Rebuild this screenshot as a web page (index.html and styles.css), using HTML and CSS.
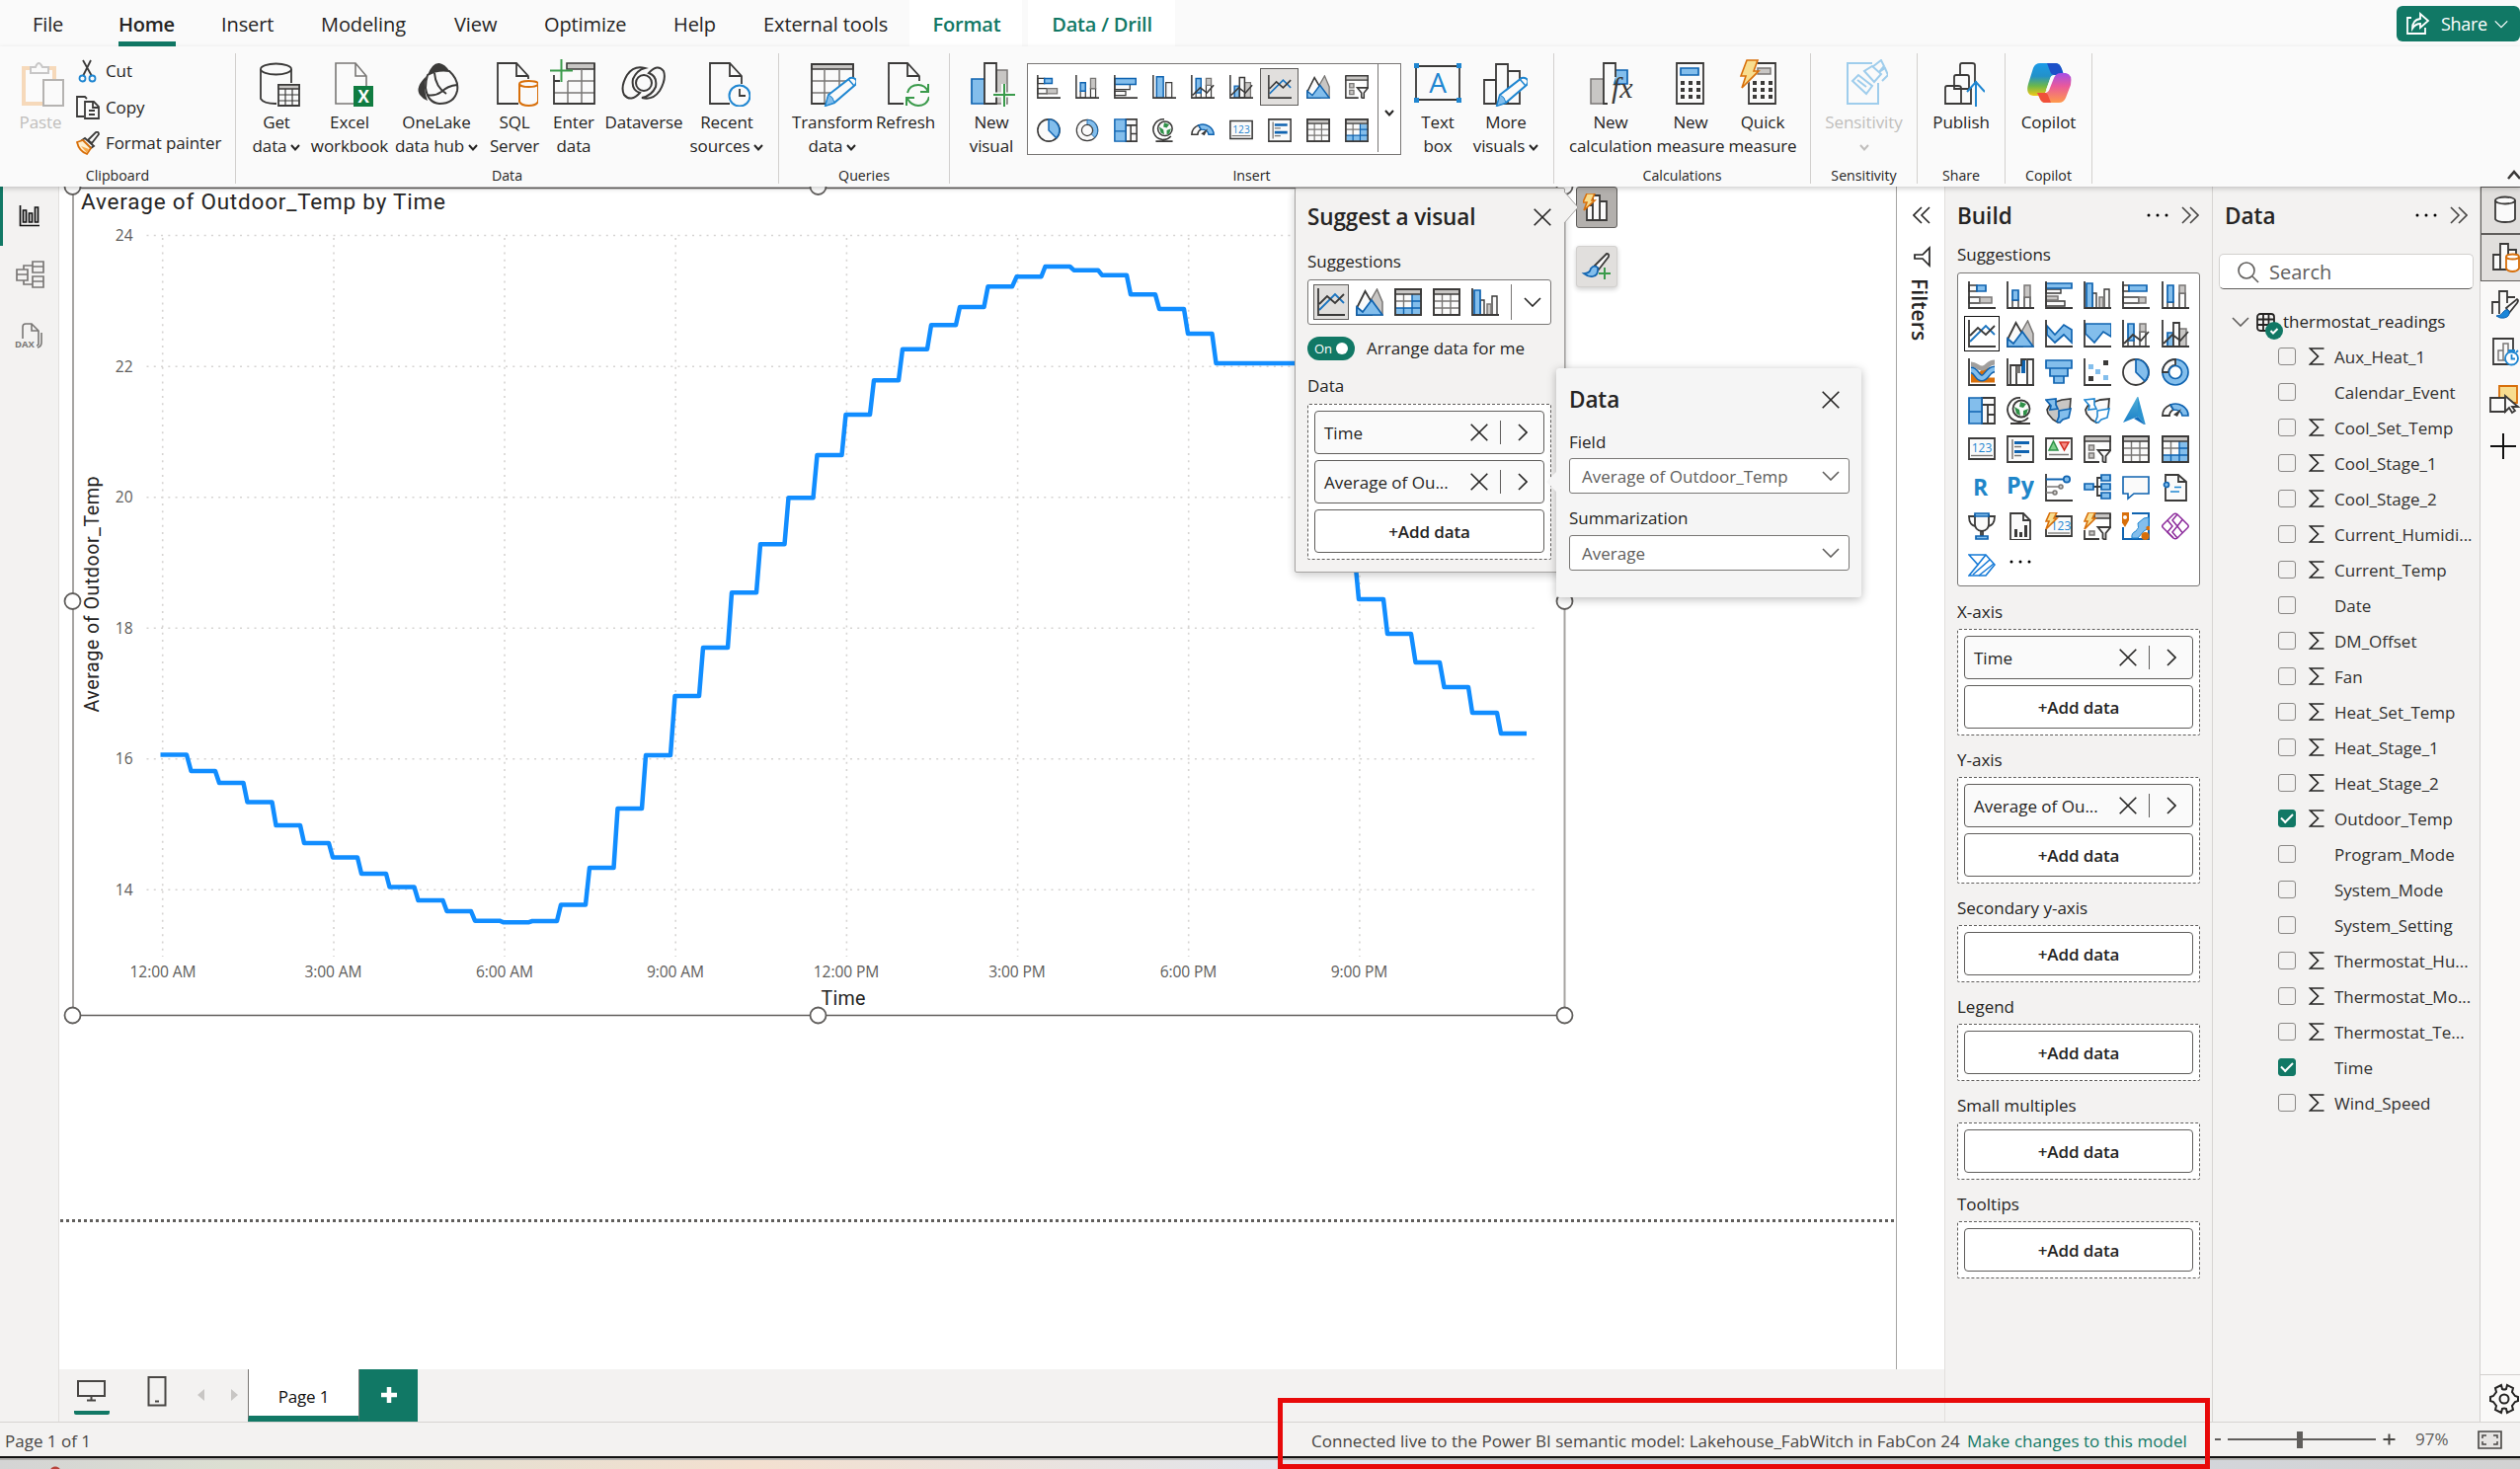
FILE: index.html
```html
<!DOCTYPE html>
<html lang="en">
<head>
<meta charset="utf-8">
<title>Report - Power BI Desktop</title>
<link rel="stylesheet" href="styles.css">
</head>
<body>
<svg class="defs" width="0" height="0">
<defs>
<linearGradient id="cpA" x1="0" y1="0" x2="0" y2="1"><stop offset="0" stop-color="#1b9be8"/><stop offset=".4" stop-color="#2391c9"/><stop offset=".7" stop-color="#6cb84a"/><stop offset="1" stop-color="#f3c716"/></linearGradient>
<linearGradient id="cpB" x1="0" y1="0" x2="0" y2="1"><stop offset="0" stop-color="#a44fe6"/><stop offset=".45" stop-color="#ea5a9a"/><stop offset="1" stop-color="#ff9a4a"/></linearGradient>
<linearGradient id="arw" x1="0" y1="0" x2="0" y2="1"><stop offset="0" stop-color="#52b0d8"/><stop offset="1" stop-color="#1a80c8"/></linearGradient>
</defs>
</svg>
<svg class="sprite">
<!-- visual type icons, 28px grid -->
<symbol id="sbar" viewBox="0 0 28 28"><path class="w" d="M1 4h8v6H1zM1 16h11v6H1z"/><path class="b" d="M9 4h9v6H9z"/><path class="g" d="M12 16h12v6H12z"/><path class="k" d="M1 0v27h27"/></symbol>
<symbol id="scol" viewBox="0 0 28 28"><path class="w" d="M6 19h6v8H6zM18 16h6v11h-6z"/><path class="b" d="M6 9h6v10H6z"/><path class="g" d="M18 4h6v12h-6z"/><path class="k" d="M1 0v27h27"/></symbol>
<symbol id="cbar" viewBox="0 0 28 28"><path class="w" d="M1 8h15v4H1zM1 20h19v5H1z"/><path class="g" d="M1 15h12v4H1z"/><path class="b" d="M1 2h26v5H1z"/><path class="k" d="M1 0v27h27"/></symbol>
<symbol id="ccol" viewBox="0 0 28 28"><path class="w" d="M9 12h4v15H9zM21 8h5v19h-5z"/><path class="g" d="M16 16h4v11h-4z"/><path class="b" d="M3 2h6v25H3z"/><path class="k" d="M1 0v27h27"/></symbol>
<symbol id="cbar2" viewBox="0 0 28 28"><path class="w" d="M1 11h18v6H1zM1 19h13v5H1z"/><path class="b" d="M1 4h25v7H1z"/><path class="k" d="M1 0v27h27"/></symbol>
<symbol id="ccol2" viewBox="0 0 28 28"><path class="w" d="M16 9h7v18h-7z"/><path class="b" d="M5 2h8v25H5z"/><path class="k" d="M1 0v27h27"/></symbol>
<symbol id="hbar" viewBox="0 0 28 28"><path class="w" d="M1 4h6v6H1zM1 16h16v6H1z"/><path class="b" d="M7 4h18v6H7z"/><path class="g" d="M17 16h7v6h-7z"/><path class="k" d="M1 0v27h27"/></symbol>
<symbol id="hcol" viewBox="0 0 28 28"><path class="w" d="M6 21h6v6H6zM18 12h6v15h-6z"/><path class="b" d="M6 4h6v17H6z"/><path class="g" d="M18 4h6v8h-6z"/><path class="k" d="M1 0v27h27"/></symbol>
<symbol id="line" viewBox="0 0 28 28"><path class="bl" d="M2 22 18 6l9 9"/><path class="k" d="M1 0v27h27M2 16l8-8 8 7 9-9"/></symbol>
<symbol id="area" viewBox="0 0 28 28"><path class="g" d="M14 14 21.500 1 27 14v13H14z"/><path class="w k2" d="M1 20 9.500 3 16 14v13H1z"/><path class="b" d="M1 19l6 5 9-12 11 15H1z"/></symbol>
<symbol id="sarea" viewBox="0 0 28 28"><path class="b" d="M2 6l8 9 9-10 8 5v13l-8-8-9 8-8-8z"/><path class="k" d="M1 0v27h27"/></symbol>
<symbol id="harea" viewBox="0 0 28 28"><path class="b" d="M2 4h26v13l-8-5-9 11-9-9z"/><path class="k" d="M1 0v27h27"/></symbol>
<symbol id="lscol" viewBox="0 0 28 28"><path class="w" d="M6 20h6v7H6zM18 12h6v15h-6z"/><path class="b" d="M6 4h6v17H6z"/><path class="g" d="M18 4h6v8h-6z"/><path class="k" d="M1 0v27h27M2 24l9-9 8 6 8-9"/></symbol>
<symbol id="lccol" viewBox="0 0 28 28"><path class="b" d="M6 13h6v14H6z"/><path class="g" d="M18 9h7v18h-7z"/><path class="w k2" d="M12 3h6v24h-6z"/><path class="k" d="M1 0v27h27M2 24l9-9 8 6 8-9"/></symbol>
<symbol id="ribbon" viewBox="0 0 28 28"><path d="M3 18h8l6-6h10M3 22h24" stroke="#d86f0a" stroke-width="5" fill="none"/><path d="M3 6c6 0 7 5 12 4 5-1 5-6 12-6" stroke="#a19f9d" stroke-width="5" fill="none"/><path d="M3 12c6 0 6 8 11 8s6-9 13-9" stroke="#0f63b0" stroke-width="7" fill="none"/><path d="M3 12c6 0 6 8 11 8s6-9 13-9" stroke="#83beec" stroke-width="4" fill="none"/><path class="k" d="M1 0v27h27"/></symbol>
<symbol id="wfall" viewBox="0 0 28 28"><path class="w k2" d="M4 7h6v20H4zM21 1h6v26h-6z"/><path d="M10 7h4v8h-4z" fill="#797775"/><path d="M15 1h4v14h-4z" fill="#0f63b0"/><path class="k" d="M1 0v27h27M10 7h5V1h5"/></symbol>
<symbol id="funnel" viewBox="0 0 28 28"><path class="b" d="M1 2h26v8H1zM5 10h18v8H5zM9 18h10v7H9z"/></symbol>
<symbol id="scat" viewBox="0 0 28 28"><path fill="#3b3a39" d="M20 2h5v5h-5zM5 18h5v5H5z"/><path fill="#83beec" d="M5 6h5v5H5zM12 11h5v5h-5zM20 17h5v5h-5z"/><path class="k" d="M1 0v27h27"/></symbol>
<symbol id="pie" viewBox="0 0 28 28"><circle class="w k2" cx="14" cy="14" r="13"/><path class="b" d="M14 1v13l9 9A13 13 0 0 0 14 1z"/></symbol>
<symbol id="donut" viewBox="0 0 28 28"><circle class="b" cx="14" cy="14" r="13"/><path class="w k2" d="M1 14A13 13 0 0 1 14 1v6a7 7 0 0 0-7 7z"/><circle class="bw" cx="14" cy="14" r="6.500"/></symbol>
<symbol id="donut2" viewBox="0 0 28 28"><circle class="w" cx="14" cy="14" r="12.500"/><path d="M14 1.500v6a6.500 6.500 0 0 1 5 11l4 4a12.500 12.500 0 0 0-9-21z" fill="#83beec" stroke="#0f63b0" stroke-width="1"/><circle class="w" cx="14" cy="14" r="6.500" fill="#fff"/></symbol>
<symbol id="tree" viewBox="0 0 28 28"><path class="w k2" d="M14 1h13v7H14zM14 8h6v19h-6zM20 8h7v10h-7zM20 18h7v9h-7z"/><path class="b" d="M1 1h13v14H1zM1 15h13v12H1z"/></symbol>
<symbol id="globe" viewBox="0 0 28 28"><path class="k" d="M14 1A12 12 0 1 0 22 21M14 24v3M4 27h20"/><circle class="w k2" cx="15" cy="12" r="8.500"/><path fill="#2f9148" d="M14 5l6 2-3 4-4-1zM8 10l5 3 1 6-4-2zM17 14l5-2-2 6-3 1z"/></symbol>
<symbol id="fmap" viewBox="0 0 28 28"><path d="M11 5l6-2 9-1-1 12-8 8-4 4-5-3-5-6-1-4 3-5z" fill="#c8c6c4" stroke="#3b3a39" stroke-width="1.600"/><path class="b" d="M1 3l10-1v6l2 4-8 1 1-4zM14 14l12-2-2 9-6 2-3 3-3-1 2-5z"/></symbol>
<symbol id="smap" viewBox="0 0 28 28"><path class="k w" d="M11 5l6-2 9-1-1 12-8 8-4 4-5-3-5-6-1-4 3-5z"/><path d="M1 3l10-1v6l2 4-8 1 1-4zM14 14l12-2-2 9-6 2-3 3-3-1 2-5z" fill="#fff" stroke="#1f86d1" stroke-width="1.600"/></symbol>
<symbol id="azmap" viewBox="0 0 28 28"><path d="M16-1v21L1 26z" fill="url(#arw)"/><path d="M16-1l8 30-8-9z" fill="#2b93cf"/><path d="M16 20l-4 2 12 7z" fill="#0f6cbd"/></symbol>
<symbol id="gauge" viewBox="0 0 28 28"><path class="w k2" d="M1 19A13 12 0 0 1 9 8l3 5q-4 2-4 6z"/><path class="b" d="M9 8a13 12 0 0 1 18 11h-6q-1-6-9-6z"/><path d="M12 18 20 12l-4 8z" fill="#3b3a39"/></symbol>
<symbol id="card" viewBox="0 0 28 28"><path class="k w" d="M1 3h26v21H1z"/><text x="14" y="17" font-size="12" text-anchor="middle" fill="#1f86d1">123</text><path d="M3 20.500h22" stroke="#797775" stroke-width="1.300"/></symbol>
<symbol id="mcard" viewBox="0 0 28 28"><path class="k w" d="M1 1h26v26H1z"/><path d="M6 4v20M8 11.500h7M8 20.500h7" stroke="#797775" stroke-width="1.500"/><path d="M8 7.500h15M8 16.500h15" stroke="#0f63b0" stroke-width="3"/></symbol>
<symbol id="kpi" viewBox="0 0 28 28"><path class="k w" d="M1 3h26v21H1z"/><path d="M4 15l4.500-9 4.500 9z" fill="#7ccf8a" stroke="#2f9148" stroke-width="1.500"/><path d="M15 7h9l-4.500 8z" fill="#f58b84" stroke="#d1281d" stroke-width="1.500"/><path d="M4 19.500h20" stroke="#797775" stroke-width="1.500"/></symbol>
<symbol id="slicer" viewBox="0 0 28 28"><path class="w k2" d="M1 1h26v13M1 1v26h15"/><path class="gd" d="M1 1h26v5H1z"/><path d="M5.500 10h5v5h-5zM5.500 18h5v5h-5z" fill="#c8c6c4" stroke="#797775" stroke-width="1.500"/><path class="k w" d="M14.500 15h13l-5 6v7l-3-1.500V21z"/></symbol>
<symbol id="table" viewBox="0 0 28 28"><path class="w" d="M1 1h26v26H1z"/><path d="M9.500 6v21M18 6v21M1 13h26M1 20h26" stroke="#797775" stroke-width="1.400"/><path class="gd" d="M1 1h26v5H1z"/><path class="k" d="M1 1h26v26H1z"/></symbol>
<symbol id="matrix" viewBox="0 0 28 28"><path class="w" d="M1 1h26v26H1z"/><path d="M18 6h9v21H1v-7h17z" fill="#83beec"/><path d="M9.500 6v14M1 13h17" stroke="#797775" stroke-width="1.400"/><path d="M18 6v21M1 20h26M9.500 20v7M18 13h9" stroke="#0f63b0" stroke-width="1.400"/><path class="gd" d="M1 1h26v5H1z"/><path class="k" d="M1 1h26v26H1z"/></symbol>
<symbol id="rr" viewBox="0 0 28 28"><text x="12.500" y="22" font-size="23" font-weight="700" text-anchor="middle" fill="#1f86c9">R</text></symbol>
<symbol id="py" viewBox="0 0 28 28"><text x="14" y="20" font-size="23" font-weight="700" text-anchor="middle" fill="#1f86c9" textLength="28" lengthAdjust="spacingAndGlyphs">Py</text></symbol>
<symbol id="infl" viewBox="0 0 28 28"><path class="k" d="M1 0v27h27"/><path d="M1 13h13M1 19h7" stroke="#797775" stroke-width="1.500"/><path d="M1 5.500h18" stroke="#0f63b0" stroke-width="2"/><circle class="b" cx="22" cy="5.500" r="3.200"/><circle class="g" cx="16" cy="13" r="2"/><circle class="g" cx="10" cy="19" r="2"/></symbol>
<symbol id="decomp" viewBox="0 0 28 28"><path class="k" d="M10 13h8M18 4h-4v18h4"/><path class="b" d="M1 10h9v6H1zM18 1h9v6h-9zM18 10h9v6h-9zM18 19h9v6h-9z"/></symbol>
<symbol id="qa" viewBox="0 0 28 28"><path d="M1 3h26v17H12l-6 5v-5H1z" fill="#fafafa" stroke="#0f63b0" stroke-width="1.600"/></symbol>
<symbol id="narr" viewBox="0 0 28 28"><path class="w k2" d="M4 9V1h13l8 7v19H4V14"/><path class="k" d="M17 1v7h8"/><circle class="b" cx="5" cy="11" r="2.500"/><path d="M13 13.500h7M9 18h9" stroke="#1f86d1" stroke-width="1.500"/></symbol>
<symbol id="trophy" viewBox="0 0 28 28"><path class="k" d="M8 4H1q0 10 8 10M20 4h7q0 10-8 10"/><path class="k w" d="M7 3h14v9q0 6-7 7-7-1-7-7zM13 19h2v5h-2z"/><path class="b" d="M7 1h14v3H7zM8 24h12v3H8z"/></symbol>
<symbol id="pagin" viewBox="0 0 28 28"><path class="k w" d="M4 1h13l7 7v20H4z"/><path class="k" d="M17 1v7h7"/><path d="M8 17h3v8H8zM13 20h3v5h-3zM18 13h3v12h-3z" fill="#3b3a39"/></symbol>
<symbol id="ncard" viewBox="0 0 28 28"><path class="w k2" d="M10 4h17v20H1v-7"/><text x="16" y="18" font-size="12" text-anchor="middle" fill="#1f86d1">123</text><path d="M3 21h22" stroke="#797775" stroke-width="1.300"/><path class="o" d="M5 0h7l-3 6h3L1 17l3-8H1z"/></symbol>
<symbol id="nslicer" viewBox="0 0 28 28"><path class="gd" d="M11 1h16v5H11z"/><path class="k" d="M27 1v13M1 18v9h15"/><path d="M6 19h5v4H6z" class="g"/><path class="k w" d="M14.500 15h13l-5 6v7l-3-1.500V21z"/><path class="o" d="M5 0h7l-3 6h3L1 17l3-8H1z"/></symbol>
<symbol id="arc" viewBox="0 0 28 28"><path d="M10 1h17v26H1V15" fill="none" stroke="#0f63b0" stroke-width="2"/><path d="M10 26q-1-5 4-7 4-3 2-8l6-5 5-1v11l-5 3-6 7z" fill="#83beec" stroke="#1f86d1"/><path d="M-1 0h8v8l-4 7-4-6z" fill="#d86f0a"/><circle cx="3" cy="5" r="2" fill="#fff"/><circle cx="23.500" cy="24" r="4" fill="#d86f0a"/><circle cx="26.500" cy="16" r="2.200" fill="#d86f0a"/></symbol>
<symbol id="papps" viewBox="0 0 28 28"><g fill="none" stroke="#8d2c9c" stroke-width="1.500"><path d="M12 2 1.500 12.500q-1.500 1.500 0 3L12 26q2 1.500 4 0l10.500-10.500q1.500-1.500 0-3L16 2q-2-1.500-4 0z"/><path d="M16 2l-5 6 5 6 5-6.500M16 14l-5 6 5 6M16 14l5-6.500M16 14l5 6.500M12 26 6 20 11 14 6 8"/></g></symbol>
<symbol id="pauto" viewBox="0 0 28 28"><g fill="#fff" stroke="#1479d6" stroke-width="1.600"><path d="M1 4h17l9 10-9 11H1l9-11z"/><path d="M10 14l8-10M5 24 22 9M11 25 26 13" fill="none"/></g></symbol>

<!-- ribbon icons, 48px grid -->
<symbol id="paste" viewBox="0 0 48 48"><g opacity=".38"><path d="M7 9h31v36H7z" fill="#fff" stroke="#f0a653" stroke-width="4"/><path d="M14 14V8h5q3-8 7 0h6v6z" fill="#fafafa" stroke="#797775" stroke-width="2"/></g><path d="M27 21h20v26H27z" fill="#fafafa" stroke="#b5b3b1" stroke-width="2"/></symbol>
<symbol id="getd" viewBox="0 0 48 48"><path class="w k2" d="M8 10v30q3 5 15 5l16-2V10"/><ellipse class="w k2" cx="23.500" cy="10" rx="15.500" ry="5.500"/><path d="M24 24h24v24H24z" fill="#fafafa"/><path class="w k2" d="M26 26h21v21H26z"/><path class="gd" d="M26 26h21v4H26z"/><path d="M33 30v17M40 30v17M26 36h21M26 42h21" stroke="#3b3a39" stroke-width="1.200"/></symbol>
<symbol id="excel" viewBox="0 0 48 48"><path d="M28 45H10V4h20l11 13v10M30 4v13h11" fill="none" stroke="#797775" stroke-width="1.600"/><path d="M28 27h20v21H28z" fill="#107c41"/><text x="38" y="44" font-size="17" font-weight="700" text-anchor="middle" fill="#fff">X</text></symbol>
<symbol id="onelake" viewBox="0 0 48 48"><path d="M15 16Q20 3 27 4q6 1 10 8-10-3-22 4zM14 17Q2 28 7 36q3 4 8 6-5-12-1-25z" fill="#3b3a39"/><g fill="none" stroke="#3b3a39" stroke-width="2"><path d="M15 16q10-6 22-4 10 9 8 20-3 13-18 13-12-1-14-16 0-7 2-13z"/><path d="M22 14q1 14 12 21M14 36q8 2 15-3 6-6 16-7"/></g></symbol>
<symbol id="sql" viewBox="0 0 48 48"><path class="k" d="M28 45H7V4h19l12 13v3M26 4v13h12"/><path d="M29 25v18q2 4 9.500 4t9.500-4V25" fill="#fafafa" stroke="#d86f0a" stroke-width="2"/><ellipse cx="38.500" cy="25" rx="9.500" ry="3" fill="#fafafa" stroke="#d86f0a" stroke-width="2"/></symbol>
<symbol id="enter" viewBox="0 0 48 48"><path class="gd" d="M17 4h28v6H17z"/><path d="M18 22v23M32 10v35M4 34h41M18 22h27" stroke="#797775" stroke-width="1.500"/><path class="k" d="M45 4v41H4V16M4 22h6"/><path d="M11.500 0v23M0 11.500h23" stroke="#3a9a4b" stroke-width="2"/></symbol>
<symbol id="dataverse" viewBox="0 0 48 48"><g fill="none" stroke="#3b3a39" stroke-width="2"><path d="M25 9Q14 6 7 16q-7 12-3 20 7 8 16-2-9-3-7-14 4-9 12-11z"/><path d="M22 39q11 3 18-7 7-12 4-20-6-8-15 2 9 3 7 14-4 9-14 11z"/><circle cx="24" cy="24" r="8"/></g></symbol>
<symbol id="recent" viewBox="0 0 48 48"><path class="k" d="M27 45H7V4h20l12 13v8M27 4v13h12"/><circle cx="37" cy="37" r="10.500" fill="#fafafa" stroke="#1f86d1" stroke-width="2"/><path class="k" d="M37 30v7h6"/></symbol>
<symbol id="transf" viewBox="0 0 48 48"><path class="gd" d="M3 5h42v5H3z"/><path d="M16 10v35M31 10v20M3 22h38M3 34h24" stroke="#797775" stroke-width="1.500"/><path class="k" d="M24 45H3V5h42v16"/><use href="#pencil"/></symbol>
<symbol id="pencil" viewBox="0 0 48 48"><path d="M17 47l3-11 22-17q4-1 6 2 1 3-1 5L26 44z" fill="#fafafa" stroke="#1f86d1" stroke-width="2"/><path d="M17 47l3-11q5 2 6 8z" fill="#83beec" stroke="#1f86d1"/><path d="M40 20l6 7" stroke="#1f86d1" stroke-width="1.500"/></symbol>
<symbol id="refresh" viewBox="0 0 48 48"><path class="k" d="M22 45H7V4h19l12 13v5M26 4v13h12"/><g fill="none" stroke="#3a9a4b" stroke-width="2"><path d="M26 34q2-8 11-8 7 0 10 7M47 25v8h-8M48 38q-2 9-11 9-7 0-11-7M25 47v-8h8"/></g></symbol>
<symbol id="newvis" viewBox="0 0 48 48"><path class="b" d="M4 20h13v25H4z"/><path class="g" d="M29 11h11v34H29z"/><path class="w k2" d="M17 4h12v41H17z"/><path d="M24 36h24M36.500 25v23" stroke="#fafafa" stroke-width="5"/><path d="M26 36h22M37 25v23" stroke="#3a9a4b" stroke-width="2"/></symbol>
<symbol id="textbox" viewBox="0 0 48 48"><path class="w k2" d="M2 7h44v34H2z"/><text x="24" y="34" font-size="28" text-anchor="middle" fill="#1f86d1">A</text><path d="M0 4h5v5H0zM43 4h5v5h-5zM0 39h5v5H0zM43 39h5v5h-5z" fill="#1f86d1"/></symbol>
<symbol id="morevis" viewBox="0 0 48 48"><path class="w k2" d="M2 21h12v24H2zM26 12h12v33H26z"/><path class="w k2" d="M14 5h12v40H14z"/><use href="#pencil" x="-2"/></symbol>
<symbol id="newcalc" viewBox="0 0 48 48"><path class="g" d="M4 20h13v25H4z"/><path class="b" d="M28 11h13v14H28z"/><path class="w k2" d="M29 18V4H17v41h4"/><text x="25" y="39" font-family="Liberation Serif,serif" font-size="30" font-style="italic" fill="#3b3a39">fx</text></symbol>
<symbol id="calc" viewBox="0 0 48 48"><path class="w k2" d="M10 4h27v41H10z"/><path d="M14 22h4v4h-4zM22 22h4v4h-4zM30 22h4v4h-4zM14 29h4v4h-4zM22 29h4v4h-4zM30 29h4v4h-4zM14 36h4v4h-4zM22 36h4v4h-4zM30 36h4v4h-4z" fill="#3b3a39"/></symbol>
<symbol id="newmeas" viewBox="0 0 48 48"><use href="#calc"/><path class="b" d="M14 9h18v7H14z"/></symbol>
<symbol id="quick" viewBox="0 0 48 48"><use href="#calc"/><path class="g" d="M19 9h13v6H19z"/><path d="M0 0h20l-4 12h5L1 33z" fill="#fafafa"/><path class="o" d="M8 1h11l-4 11h5L3 29l4-12H2z"/></symbol>
<symbol id="sens" viewBox="0 0 48 48"><g fill="none" stroke="#9fcdec" stroke-width="2"><path d="M32 4H7v41h31V24"/><path d="M12 22l6-6 14 11-6 8zM17 21l9 7M24 12l10 11 7-8-9-8zM32 8l9-7 3 6-5 6 6-4 3 7-6 6"/></g></symbol>
<symbol id="publish" viewBox="0 0 48 48"><path class="k" d="M35 30H17V18q0-2 2-2h11q2 0 2 2v11M23 16V6q0-2 2-2h10q3 0 3 2v20M8 45V29q0-2 2-2h11q3 0 3 2v16zM24 45h10V30"/><path d="M39 22v26M30 33l9-10 9 10" fill="none" stroke="#1f86d1" stroke-width="2"/></symbol>
<symbol id="copilot" viewBox="0 0 48 48"><path d="M15 4h16q4 0 6 6l2 6H29q-3 0-4 4l-4 12q-2 5-7 5H8q-8-1-5-12L8 9q2-5 7-5z" fill="url(#cpA)"/><path d="M22 4h9q4 0 6 6l2 6h-9q-4 0-5-4z" fill="#1c50c8"/><path d="M34 44H20q-4 0-6-6l-2-4h9q3-1 4-5l4-10q2-5 7-5h5q7 1 5 12l-5 13q-2 5-7 5z" fill="url(#cpB)"/><path d="M12 34h9q2 1 3 5l2 5h-6q-4 0-6-6z" fill="#f0503a"/><path d="M29 17h-2q-1 0-2 3l-4 11h1q2-1 3-4z" fill="#fafafa"/></symbol>
<symbol id="cut" viewBox="0 0 24 24"><path d="M7 1l9 16M15 1 7 17" stroke="#3b3a39" stroke-width="1.800"/><circle cx="6.500" cy="19.500" r="3" fill="none" stroke="#1f86d1" stroke-width="1.800"/><circle cx="16.500" cy="19.500" r="3" fill="none" stroke="#1f86d1" stroke-width="1.800"/></symbol>
<symbol id="copy" viewBox="0 0 24 24"><path class="k" d="M8 21H1V1h8l2 2"/><path class="k w" d="M9 6h9l5 5v12H9z"/><path class="k" d="M17 6v6h6M13 15h6M13 19h6" stroke-width="1.300"/></symbol>
<symbol id="brush" viewBox="0 0 24 24"><path class="k w" d="M12 9l8-8q3-1 3 2l-7 9z"/><path class="k w" d="M9 7l9 8-3 2-9-8z"/><path d="M7 9l8 8-4 6Q3 20 1 11z" fill="#fff0d0" stroke="#d86f0a" stroke-width="1.800"/><path d="M5 15l6 7 2-4z" fill="#f8a94a"/></symbol>
<!-- interface glyphs -->
<symbol id="x" viewBox="0 0 18 18"><path class="t" d="M.7.7l16.600 16.600M17.300.7.7 17.300"/></symbol>
<symbol id="right" viewBox="0 0 10 18"><path class="t" d="M1 1l8 8-8 8"/></symbol>
<symbol id="down" viewBox="0 0 18 10"><path class="t" d="M1 1l8 8 8-8"/></symbol>
<symbol id="dd" viewBox="0 0 10 7"><path d="M1 1l4 4.500L9 1" fill="none" stroke="currentColor" stroke-width="2"/></symbol>
<symbol id="dbl" viewBox="0 0 18 18"><path class="t" d="M1 1l8 8-8 8M9 1l8 8-8 8"/></symbol>
<symbol id="dots" viewBox="0 0 22 4"><circle cx="2" cy="2" r="1.500"/><circle cx="11" cy="2" r="1.500"/><circle cx="20" cy="2" r="1.500"/></symbol>
<symbol id="sigma" viewBox="0 0 16 18"><path d="M15.500 1H1.500l8 8-8 8h14" fill="none" stroke="#252423" stroke-width="1.700"/></symbol>
<symbol id="bolt" viewBox="0 0 28 28"><path class="w k2" d="M4 12h6v15H4zM17 8h7v19h-7z"/><path class="w k2" d="M10 2h7v25h-7z"/><path class="o" d="M4 0h8l-3 7h3L1 17l3-8H0z"/></symbol>
</svg>

<div class="app">
<header class="tabs">
  <div class="tab t-file">File</div><div class="tab t-home">Home</div><div class="tab t-insert">Insert</div><div class="tab t-model">Modeling</div><div class="tab t-view">View</div><div class="tab t-opt">Optimize</div><div class="tab t-help">Help</div><div class="tab t-ext">External tools</div><div class="tab ctx t-format">Format</div><div class="tab ctx t-drill">Data / Drill</div>
  <div class="share"><svg width="24" height="24" viewBox="0 0 24 24" fill="none" stroke="#fff" stroke-width="1.800"><path d="M6 6H2v16h18v-6"/><path d="M7 17q0-9 8-10V2l8 7-8 7v-4q-5 0-8 5z"/></svg><span>Share</span><svg width="14" height="9"><use href="#down"/></svg></div>
</header>
<section class="ribbon">
  <div class="group" style="width:239px"><div class="tools clip">
    <div class="btn off" style="width:74px"><svg class="big"><use href="#paste"/></svg><span>Paste</span></div>
    <div class="small"><div><svg><use href="#cut"/></svg>Cut</div><div><svg><use href="#copy"/></svg>Copy</div><div><svg><use href="#brush"/></svg>Format painter</div></div>
  </div><div class="gname">Clipboard</div></div>
  <div class="group" style="width:550px"><div class="tools pad8">
    <div class="btn" style="width:64px"><svg class="big"><use href="#getd"/></svg><span>Get</span><span>data<svg class="dd"><use href="#dd"/></svg></span></div>
    <div class="btn" style="width:84px"><svg class="big"><use href="#excel"/></svg><span>Excel</span><span>workbook</span></div>
    <div class="btn" style="width:92px"><svg class="big"><use href="#onelake"/></svg><span>OneLake</span><span>data hub<svg class="dd"><use href="#dd"/></svg></span></div>
    <div class="btn" style="width:66px"><svg class="big"><use href="#sql"/></svg><span>SQL</span><span>Server</span></div>
    <div class="btn" style="width:54px"><svg class="big"><use href="#enter"/></svg><span>Enter</span><span>data</span></div>
    <div class="btn" style="width:88px"><svg class="big"><use href="#dataverse"/></svg><span>Dataverse</span></div>
    <div class="btn" style="width:80px"><svg class="big"><use href="#recent"/></svg><span>Recent</span><span>sources<svg class="dd"><use href="#dd"/></svg></span></div>
  </div><div class="gname">Data</div></div>
  <div class="group" style="width:173px"><div class="tools pad12">
    <div class="btn" style="width:84px"><svg class="big"><use href="#transf"/></svg><span>Transform</span><span>data<svg class="dd"><use href="#dd"/></svg></span></div>
    <div class="btn" style="width:64px"><svg class="big"><use href="#refresh"/></svg><span>Refresh</span></div>
  </div><div class="gname">Queries</div></div>
  <div class="group" style="width:612px"><div class="tools pad12">
    <div class="btn" style="width:60px"><svg class="big"><use href="#newvis"/></svg><span>New</span><span>visual</span></div>
    <div class="gallery"><div class="cells">
      <i><svg><use href="#sbar"/></svg></i><i><svg><use href="#scol"/></svg></i><i><svg><use href="#cbar2"/></svg></i><i><svg><use href="#ccol2"/></svg></i><i><svg><use href="#lscol"/></svg></i><i><svg><use href="#lccol"/></svg></i><i class="sel"><svg><use href="#line"/></svg></i><i><svg><use href="#area"/></svg></i><i><svg><use href="#slicer"/></svg></i>
      <i><svg><use href="#pie"/></svg></i><i><svg><use href="#donut2"/></svg></i><i><svg><use href="#tree"/></svg></i><i><svg><use href="#globe"/></svg></i><i><svg><use href="#gauge"/></svg></i><i><svg><use href="#card"/></svg></i><i><svg><use href="#mcard"/></svg></i><i><svg><use href="#table"/></svg></i><i><svg><use href="#matrix"/></svg></i>
    </div><div class="more"><svg class="dd"><use href="#dd"/></svg></div></div>
    <div class="btn" style="width:74px"><svg class="big"><use href="#textbox"/></svg><span>Text</span><span>box</span></div>
    <div class="btn" style="width:64px"><svg class="big"><use href="#morevis"/></svg><span>More</span><span>visuals<svg class="dd"><use href="#dd"/></svg></span></div>
  </div><div class="gname">Insert</div></div>
  <div class="group" style="width:260px"><div class="tools pad12">
    <div class="btn" style="width:90px"><svg class="big"><use href="#newcalc"/></svg><span>New</span><span>calculation</span></div>
    <div class="btn" style="width:72px"><svg class="big"><use href="#newmeas"/></svg><span>New</span><span>measure</span></div>
    <div class="btn" style="width:74px"><svg class="big"><use href="#quick"/></svg><span>Quick</span><span>measure</span></div>
  </div><div class="gname">Calculations</div></div>
  <div class="group" style="width:108px"><div class="tools"><div class="btn off" style="width:108px"><svg class="big"><use href="#sens"/></svg><span>Sensitivity</span><span><svg class="dd"><use href="#dd"/></svg></span></div></div><div class="gname">Sensitivity</div></div>
  <div class="group" style="width:89px"><div class="tools"><div class="btn" style="width:89px"><svg class="big"><use href="#publish"/></svg><span>Publish</span></div></div><div class="gname">Share</div></div>
  <div class="group" style="width:88px"><div class="tools"><div class="btn" style="width:88px"><svg class="big"><use href="#copilot"/></svg><span>Copilot</span></div></div><div class="gname">Copilot</div></div>
  <svg class="collapse" width="14" height="10" viewBox="0 0 14 10"><path d="M1 9l6-7 6 7" fill="none" stroke="#3b3a39" stroke-width="2.500"/></svg>
</section>

<main class="body">
<nav class="views">
  <div class="cur"><svg width="22" height="22" viewBox="0 0 22 22" fill="none" stroke="#111" stroke-width="1.700"><path d="M1.500 0v20.500H21M4.500 5h3v12h-3zM10.500 8h3v9h-3zM16.500 2h3v15h-3z"/></svg></div>
  <div><svg width="29" height="29" viewBox="0 0 29 29" fill="none" stroke="#797775" stroke-width="1.700"><path d="M1 9h11v11H1zM1 14h11M17 1h11v11H17zM17 6h11M17 16h11v11H17zM17 21h11M8 9V5h9M8 20v4h9"/></svg></div>
  <div><svg width="30" height="28" viewBox="0 0 30 28" fill="none" stroke="#797775" stroke-width="1.600"><path d="M8 17V5q0-3 3-3h6l7 7v13q0 2-2 2M17 2v7h7M27 11v10q0 4-4 5"/><text x="0" y="26" font-size="9.500" font-weight="700" fill="#797775" stroke="none">DAX</text></svg></div>
</nav>
<div class="center">
  <div class="canvas">
    <svg class="chart" width="1860" height="1198" viewBox="60 189 1860 1198">
      <g class="grid"><path d="M148.500 238.500H1556M148.500 371.200H1556M148.500 503.700H1556M148.500 636.200H1556M148.500 768.700H1556M148.500 901.200H1556M164.700 241V969M338 241V969M511 241V969M684.200 241V969M857.400 241V969M1030.600 241V969M1203.700 241V969M1376.900 241V969"/></g>
      <path class="series" d="M162.500 764.500H189L193.500 781H218L222 793H246.500L250.500 812.500H275.500L279.500 836H304L308 854H333L337 868.500H362L366 885H391L394.500 898.500H419.500L423.500 912H448.500L452.500 923H477L481 932.700H506L510 934.300H535L539 933H564L568 916.500H593L597 879H621.500L625.500 819H650L654 765H679L683.500 705H708L712 656H737L741 600.300H766L770 551.300H794.500L798.500 504.300H823.500L827.500 461H852.500L856.500 420H881L885 385.300H910L914 353.700H939L943 329.300H968L972 311H996.500L1000.500 290.300H1025L1029.500 280.300H1054.500L1058.500 270H1083.500L1087.500 273.700H1112L1116 278.700H1141L1145 298.300H1170L1174 313H1199L1203 338H1227.500L1231.500 368H1314L1318 420H1343L1347 500H1366L1376 607H1401L1405 642H1429L1433.500 671H1458L1462.500 696H1487L1491 722H1516L1520 743H1546"/>
      <g class="ticks" text-anchor="end"><text x="134.500" y="244">24</text><text x="134.500" y="377">22</text><text x="134.500" y="509">20</text><text x="134.500" y="642">18</text><text x="134.500" y="774">16</text><text x="134.500" y="907">14</text></g>
      <g class="ticks" text-anchor="middle"><text x="165" y="990">12:00 AM</text><text x="337.500" y="990">3:00 AM</text><text x="511" y="990">6:00 AM</text><text x="684" y="990">9:00 AM</text><text x="857" y="990">12:00 PM</text><text x="1030" y="990">3:00 PM</text><text x="1203.500" y="990">6:00 PM</text><text x="1376.500" y="990">9:00 PM</text></g>
      <path d="M74 189v839M1584.500 189v839" stroke="#a6a4a2" stroke-width="2"/><path d="M73 190.500h1512M73 1028.500h1512" stroke="#605e5c" stroke-width="1.500"/>
      <g fill="#fff" stroke="#605e5c" stroke-width="1.800"><circle cx="73.500" cy="189" r="8"/><circle cx="828.500" cy="189" r="8"/><circle cx="1584.500" cy="189" r="8"/><circle cx="73.500" cy="609" r="8"/><circle cx="1584.500" cy="609" r="8"/><circle cx="73.500" cy="1028.500" r="8"/><circle cx="828.500" cy="1028.500" r="8"/><circle cx="1584.500" cy="1028.500" r="8"/></g>
      <text class="din" x="82" y="212" font-size="22.500" textLength="369">Average of Outdoor_Temp by Time</text>
      <text class="din" x="854" y="1018" font-size="19.700" text-anchor="middle" textLength="45">Time</text>
      <text class="din" transform="translate(99.500 602) rotate(-90)" font-size="19.700" text-anchor="middle" textLength="239">Average of Outdoor_Temp</text>
      <path d="M61 1236.500h1860" stroke="#605e5c" stroke-width="3" stroke-dasharray="3 3"/>
    </svg>
    <div class="viz-btn one"><svg width="28" height="28"><use href="#bolt"/></svg></div>
    <div class="viz-btn two"><svg width="28" height="28" viewBox="0 0 28 28"><path class="k w" d="M12 13 24 1q3 0 2 3L16 17z"/><path class="b" d="M1 21q6 0 7-5 3-4 7-1 1 8-5 9-4 1-9-3z"/><path d="M16 21h12M22 15v12" stroke="#3a9a4b" stroke-width="2"/></svg></div>
    <div class="suggest">
      <svg class="beak" width="16" height="34" viewBox="0 0 16 34"><path d="M0 1l14 16L0 33" fill="#f3f2f1" stroke="#a6a4a2"/></svg>
      <div class="head"><b>Suggest a visual</b><svg width="18" height="18"><use href="#x"/></svg></div>
      <div class="lbl l1">Suggestions</div>
      <div class="picks"><i class="sel"><svg><use href="#line"/></svg></i><i><svg><use href="#area"/></svg></i><i><svg><use href="#matrix"/></svg></i><i><svg><use href="#table"/></svg></i><i><svg><use href="#ccol"/></svg></i><span class="sep"></span><svg width="18" height="10"><use href="#down"/></svg></div>
      <div class="toggle"><span class="pill">On<em></em></span>Arrange data for me</div>
      <div class="lbl l2">Data</div>
      <div class="well"><div class="chip"><span>Time</span><svg width="18" height="18"><use href="#x"/></svg><u></u><svg width="10" height="18"><use href="#right"/></svg></div><div class="chip"><span>Average of Ou...</span><svg width="18" height="18"><use href="#x"/></svg><u></u><svg width="10" height="18"><use href="#right"/></svg></div><div class="add">+Add data</div></div>
    </div>
    <div class="datapop">
      <svg class="nib" width="12" height="22" viewBox="0 0 12 22"><path d="M12 0 1 11l11 11z" fill="#f5f5f5"/></svg>
      <div class="head"><b>Data</b><svg width="18" height="18"><use href="#x"/></svg></div>
      <div class="lbl">Field</div><div class="select"><span>Average of Outdoor_Temp</span><svg width="18" height="10"><use href="#down"/></svg></div>
      <div class="lbl lb2">Summarization</div><div class="select"><span>Average</span><svg width="18" height="10"><use href="#down"/></svg></div>
    </div>
  </div>
  <div class="filters"><svg width="18" height="18" class="flip"><use href="#dbl"/></svg><svg class="fun" width="18" height="20" viewBox="0 0 18 20"><path d="M16 1v18L9 12H1V8h8z" fill="none" stroke="#252423" stroke-width="1.700"/></svg><b>Filters</b></div>
  <div class="pages">
    <div class="mode on"><svg width="29" height="22" viewBox="0 0 29 22" fill="none" stroke="#484644" stroke-width="2"><path d="M1 1h27v15H1zM14.500 16v4M10 20.500h9"/></svg></div>
    <div class="mode ph"><svg width="20" height="31" viewBox="0 0 20 31" fill="none" stroke="#484644" stroke-width="2"><path d="M1.500 1h17v28.500h-17zM8 25.500h4"/></svg></div>
    <svg class="arr" width="7" height="12"><path d="M7 0v12L0 6z" fill="#c8c6c4"/></svg><svg class="arr r" width="7" height="12"><path d="M0 0v12l7-6z" fill="#c8c6c4"/></svg>
    <div class="page">Page 1</div><div class="plus"><svg width="18" height="18"><path d="M9 1v16M1 9h16" stroke="#fff" stroke-width="4.500"/></svg></div>
  </div>
</div>
<aside class="build">
  <div class="ptitle"><b>Build</b><svg width="22" height="4"><use href="#dots"/></svg><svg width="18" height="18"><use href="#dbl"/></svg></div>
  <div class="lbl sug">Suggestions</div>
  <div class="visgrid">
    <i><svg><use href="#sbar"/></svg></i><i><svg><use href="#scol"/></svg></i><i><svg><use href="#cbar"/></svg></i><i><svg><use href="#ccol"/></svg></i><i><svg><use href="#hbar"/></svg></i><i><svg><use href="#hcol"/></svg></i>
    <i class="sel"><svg><use href="#line"/></svg></i><i><svg><use href="#area"/></svg></i><i><svg><use href="#sarea"/></svg></i><i><svg><use href="#harea"/></svg></i><i><svg><use href="#lscol"/></svg></i><i><svg><use href="#lccol"/></svg></i>
    <i><svg><use href="#ribbon"/></svg></i><i><svg><use href="#wfall"/></svg></i><i><svg><use href="#funnel"/></svg></i><i><svg><use href="#scat"/></svg></i><i><svg><use href="#pie"/></svg></i><i><svg><use href="#donut"/></svg></i>
    <i><svg><use href="#tree"/></svg></i><i><svg><use href="#globe"/></svg></i><i><svg><use href="#fmap"/></svg></i><i><svg><use href="#smap"/></svg></i><i><svg><use href="#azmap"/></svg></i><i><svg><use href="#gauge"/></svg></i>
    <i><svg><use href="#card"/></svg></i><i><svg><use href="#mcard"/></svg></i><i><svg><use href="#kpi"/></svg></i><i><svg><use href="#slicer"/></svg></i><i><svg><use href="#table"/></svg></i><i><svg><use href="#matrix"/></svg></i>
    <i><svg><use href="#rr"/></svg></i><i><svg><use href="#py"/></svg></i><i><svg><use href="#infl"/></svg></i><i><svg><use href="#decomp"/></svg></i><i><svg><use href="#qa"/></svg></i><i><svg><use href="#narr"/></svg></i>
    <i><svg><use href="#trophy"/></svg></i><i><svg><use href="#pagin"/></svg></i><i><svg><use href="#ncard"/></svg></i><i><svg><use href="#nslicer"/></svg></i><i><svg><use href="#arc"/></svg></i><i><svg><use href="#papps"/></svg></i>
    <i><svg><use href="#pauto"/></svg></i><i class="dt"><svg><use href="#dots"/></svg></i>
  </div>
  <div class="lbl field first">X-axis</div><div class="well"><div class="chip"><span>Time</span><svg width="18" height="18"><use href="#x"/></svg><u></u><svg width="10" height="18"><use href="#right"/></svg></div><div class="add">+Add data</div></div>
  <div class="lbl field">Y-axis</div><div class="well"><div class="chip"><span>Average of Ou...</span><svg width="18" height="18"><use href="#x"/></svg><u></u><svg width="10" height="18"><use href="#right"/></svg></div><div class="add">+Add data</div></div>
  <div class="lbl field">Secondary y-axis</div><div class="well"><div class="add">+Add data</div></div>
  <div class="lbl field">Legend</div><div class="well"><div class="add">+Add data</div></div>
  <div class="lbl field">Small multiples</div><div class="well"><div class="add">+Add data</div></div>
  <div class="lbl field">Tooltips</div><div class="well"><div class="add">+Add data</div></div>
</aside>
<aside class="data">
  <div class="ptitle"><b>Data</b><svg width="22" height="4"><use href="#dots"/></svg><svg width="18" height="18"><use href="#dbl"/></svg></div>
  <div class="search"><svg width="22" height="22" viewBox="0 0 22 22" fill="none" stroke="#605e5c" stroke-width="1.600"><circle cx="9" cy="9" r="8"/><path d="M15 15l6 6"/></svg>Search</div>
  <div class="tbl"><svg width="18" height="10" class="gch"><use href="#down"/></svg><span class="ti"><svg width="19" height="19" viewBox="0 0 19 19" fill="none" stroke="#252423" stroke-width="1.800"><rect x="1" y="1" width="17" height="17" rx="3"/><path d="M7 1v17M12.500 1v17M1 6.500h17M1 12h17"/></svg><svg class="badge" width="18" height="18" viewBox="0 0 18 18"><circle cx="9" cy="9" r="9" fill="#117865"/><path d="M5.500 9l2.500 2.500 4.500-4.500" fill="none" stroke="#fff" stroke-width="2"/></svg></span><span>thermostat_readings</span></div>
  <div class="row"><s></s><svg><use href="#sigma"/></svg>Aux_Heat_1</div>
  <div class="row"><s></s><svg></svg>Calendar_Event</div>
  <div class="row"><s></s><svg><use href="#sigma"/></svg>Cool_Set_Temp</div>
  <div class="row"><s></s><svg><use href="#sigma"/></svg>Cool_Stage_1</div>
  <div class="row"><s></s><svg><use href="#sigma"/></svg>Cool_Stage_2</div>
  <div class="row"><s></s><svg><use href="#sigma"/></svg>Current_Humidi...</div>
  <div class="row"><s></s><svg><use href="#sigma"/></svg>Current_Temp</div>
  <div class="row"><s></s><svg></svg>Date</div>
  <div class="row"><s></s><svg><use href="#sigma"/></svg>DM_Offset</div>
  <div class="row"><s></s><svg><use href="#sigma"/></svg>Fan</div>
  <div class="row"><s></s><svg><use href="#sigma"/></svg>Heat_Set_Temp</div>
  <div class="row"><s></s><svg><use href="#sigma"/></svg>Heat_Stage_1</div>
  <div class="row"><s></s><svg><use href="#sigma"/></svg>Heat_Stage_2</div>
  <div class="row on"><s></s><svg><use href="#sigma"/></svg>Outdoor_Temp</div>
  <div class="row"><s></s><svg></svg>Program_Mode</div>
  <div class="row"><s></s><svg></svg>System_Mode</div>
  <div class="row"><s></s><svg></svg>System_Setting</div>
  <div class="row"><s></s><svg><use href="#sigma"/></svg>Thermostat_Hu...</div>
  <div class="row"><s></s><svg><use href="#sigma"/></svg>Thermostat_Mo...</div>
  <div class="row"><s></s><svg><use href="#sigma"/></svg>Thermostat_Te...</div>
  <div class="row on"><s></s><svg></svg>Time</div>
  <div class="row"><s></s><svg><use href="#sigma"/></svg>Wind_Speed</div>
</aside>
<nav class="rail">
  <div class="on"><svg viewBox="0 0 28 28"><path class="w k2" d="M4 5v19q2 3 10 3t10-3V5"/><ellipse class="w k2" cx="14" cy="5" rx="10" ry="3.500"/></svg></div>
  <div class="on"><svg viewBox="0 0 28 28"><path class="w k2" d="M2 12h7v15H2zM17 7h8v20h-8z"/><path class="w k2" d="M9 1h8v26H9z"/><path d="M15 14v12q2 3 6.500 3t6.500-3V14" fill="#fff" stroke="#d86f0a" stroke-width="1.800"/><ellipse cx="21.500" cy="14" rx="6.500" ry="2.500" fill="#fff" stroke="#d86f0a" stroke-width="1.800"/></svg></div>
  <div><svg viewBox="0 0 28 28"><path class="k" d="M2 24V12h7v12M9 22V1h8v12M17 7h8"/><path class="k w" d="M16 18l11-9q2 1 0 4l-8 10z"/><path d="M6 26q5 0 7-4 3-4 6-1 1 6-5 7-4 1-8-2z" fill="#1a86d9" stroke="#0f63b0"/></svg></div>
  <div><svg viewBox="0 0 28 28"><path class="k w" d="M3 1h20v26H3z"/><path d="M8 13h5v10H8zM13 6h5v17h-5z" fill="none" stroke="#797775" stroke-width="1.500"/><circle cx="21.500" cy="21" r="6.500" fill="#fff" stroke="#1f86d1" stroke-width="1.800"/><path d="M21.500 17v4.500H25M18 13h7M26 15l2-2" fill="none" stroke="#1f86d1" stroke-width="1.800"/></svg></div>
  <div><svg viewBox="0 0 28 28"><path d="M9 1h18v17H9z" fill="#f8dd8f" stroke="#d86f0a" stroke-width="1.800"/><path class="w k2" d="M0 13h15v14H0z"/><path class="w k2" d="M15 11v16l4-4 3 5 3-2-3-4h6z"/></svg></div>
  <div><svg viewBox="0 0 28 28"><path d="M13 1v26M0 14h26" stroke="#111" stroke-width="2"/></svg></div>
  <div class="gear"><svg viewBox="0 0 30 30"><path d="M12 1l1 4q2 1 4 0l1-4 6 3-1 4 3 4 3 1v4l-3 1-3 4 1 4-6 3-1-4q-2-1-4 0l-1 4-6-3 1-4-3-4-3-1v-4l3-1 3-4-1-4z" fill="none" stroke="#252423" stroke-width="2"/><circle cx="15" cy="15" r="4.500" fill="none" stroke="#252423" stroke-width="2"/></svg></div>
</nav>
</main>
<footer class="status">
  <span class="pg">Page 1 of 1</span>
  <span class="conn">Connected live to the Power BI semantic model: Lakehouse_FabWitch in FabCon 24</span><a>Make changes to this model</a>
  <svg class="zoomer" width="184" height="24" viewBox="0 0 184 24"><path d="M1 12h6M14 12h150" stroke="#605e5c" stroke-width="2"/><path d="M84 4h6v17h-6z" fill="#605e5c"/><path d="M171.500 12h12M177.500 6.500v11" stroke="#484644" stroke-width="2"/></svg><span class="pct">97%</span>
  <svg class="fit" width="25" height="19" viewBox="0 0 25 19"><path d="M1 1h23v17H1z" fill="#e6e4e2" stroke="#484644" stroke-width="1.600"/><path d="M5 8V5h4M16 5h4v3M5 11v3h4M16 14h4v-3" fill="none" stroke="#484644" stroke-width="1.500"/></svg>
</footer>
<div class="wall"></div>
<div class="mark"></div>
</div>
</body>
</html>
```
FILE: styles.css
```css
* { box-sizing: border-box; }
body { margin: 0; width: 2552px; height: 1488px; overflow: hidden; background: #fff; color: #252423; font: 17px/24px "Open Sans", "Noto Sans", sans-serif; }
svg { display: block; flex: none; overflow: visible; }
svg.defs { position: absolute; }
svg.sprite { display: none; }
b { font-weight: 600; }
i, em, u, s { font-style: normal; text-decoration: none; }
.app { position: relative; display: grid; grid-template-rows: 47px 142px 1252px 36px 11px; height: 1488px; }

/* icon paint */
.w { fill: #fafafa; stroke: #3b3a39; stroke-width: 1.4; }
.k { stroke: #3b3a39; stroke-width: 1.8; fill: none; }
.k.w { fill: #fafafa; }
.k2, .w.k2 { stroke: #3b3a39; stroke-width: 1.8; }
.b { fill: #83beec; stroke: #0f63b0; stroke-width: 1.7; }
.bw { fill: #fff; stroke: #0f63b0; stroke-width: 1.7; }
.bl { fill: none; stroke: #1a74c0; stroke-width: 1.8; }
.g { fill: #c8c6c4; stroke: #797775; stroke-width: 1.5; }
.gd { fill: #c8c6c4; stroke: #3b3a39; stroke-width: 1.6; }
.o { fill: #f8dd8f; stroke: #d86f0a; stroke-width: 1.6; }
.t { fill: none; stroke: currentColor; stroke-width: 1.6; }

/* menu tabs */
.tabs { display: flex; background: #fafafa; font-size: 20px; line-height: 50px; letter-spacing: -.1px; position: relative; z-index: 5; }
.tab { height: 47px; white-space: nowrap; }
.t-file { width: 87px; padding-left: 33px; }
.t-home { width: 58px; margin-left: 33px; font-weight: 600; border-bottom: 5px solid #117865; letter-spacing: -.3px; }
.t-insert { margin-left: 46px; width: 101px; }
.t-model { width: 135px; }
.t-view { width: 91px; }
.t-opt { width: 131px; }
.t-help { width: 91px; }
.t-ext { width: 148px; }
.ctx { background: #fff; color: #117865; font-weight: 600; text-align: center; letter-spacing: -.2px; }
.t-format { width: 114px; padding-left: 2px; }
.t-drill { width: 149px; margin-left: 6px; padding-left: 1px; }
.share { margin: 6px 1px 5px auto; width: 125px; display: flex; align-items: center; gap: 13px; padding-left: 9px; background: #117865; color: #fff; border-radius: 6px; font-size: 18px; letter-spacing: -.3px; line-height: 36px; }
.share span { margin-right: -6px; margin-left: -1px; }

/* ribbon */
.ribbon { display: flex; position: relative; z-index: 5; padding-top: 7px; background: #fafafa; box-shadow: 0 2px 5px rgba(0,0,0,.2); font-size: 17px; letter-spacing: -.1px; }
.group { height: 132px; border-right: 1.5px solid #d2d0ce; display: flex; flex-direction: column; white-space: nowrap; }
.tools { display: flex; height: 117px; padding-top: 6px; }
.pad8 { padding-left: 9px; } .pad12 { padding-left: 12px; }
.clip { padding-left: 4px; }
.btn { display: flex; flex-direction: column; align-items: center; }
.btn span { display: flex; justify-content: center; align-items: center; gap: 4px; height: 24px; }
.big { width: 48px; height: 48px; margin-bottom: 4px; }
.dd { width: 10px; height: 7px; margin-top: 3px; }
.off { color: #c0bebc; }
.small { display: flex; flex-direction: column; margin-top: -6px; }
.small div { display: flex; align-items: center; height: 36.500px; gap: 6px; margin-left: -1px; }
.small svg { width: 24px; height: 24px; }
.gname { text-align: center; font-size: 14.2px; line-height: 16px; letter-spacing: 0; }
.gallery { display: flex; width: 379px; height: 93px; margin: 4px 0 0 6px; border: 1.5px solid #797775; background: #fff; }
.cells { display: grid; grid-template-columns: repeat(9, 39px); grid-template-rows: 38px 38px; row-gap: 6px; padding: 4px 0 0 1px; width: 354px; }
.cells i { display: flex; align-items: center; justify-content: center; }
.cells i.sel { border: 1.5px solid #605e5c; background: #e1dfdd; }
.cells svg { width: 24px; height: 24px; }
.more { flex: 1; border-left: 1.5px solid #797775; display: flex; align-items: center; justify-content: center; padding-top: 6px; margin-bottom: 2px; }
.more .dd { margin-left: -1px; }
.collapse { margin: 118px 0 0 420px; }

/* workspace */
.body { display: grid; grid-template-columns: 60px 1909px 271px 271px 41px; border-bottom: 1px solid #d6d4d2; background: #f3f2f1; }
.views { border-right: 1px solid #e1dfdd; }
.views div { height: 59px; display: flex; align-items: center; justify-content: center; border-left: 3px solid transparent; padding-right: 2px; }
.views .cur { border-color: #117865; height: 60px; padding-bottom: 1px; }
.views div:nth-child(3) { height: 64px; }
.center { display: grid; grid-template-columns: 1860px 49px; grid-template-rows: 1198px 53px; }
.canvas { position: relative; background: #fff; overflow: hidden; }
.grid path { fill: none; stroke: #d6d4d2; stroke-width: 1.6; stroke-dasharray: 2 5.270; }
.series { fill: none; stroke: #118dff; stroke-width: 4.5; stroke-linejoin: round; }
.ticks { font-size: 15.6px; fill: #605e5c; letter-spacing: -.1px; }
.din { font-family: Roboto, "Open Sans", sans-serif; fill: #252423; }
.filters { border-left: 1.5px solid #a6a4a2; background: #fff; display: flex; flex-direction: column; align-items: center; padding-top: 20px; padding-right: 3px; }
.flip { transform: scaleX(-1); margin-right: -4px; }
.fun { margin: 23px 0 12px 6px; }
.filters b { writing-mode: vertical-rl; font-size: 21px; letter-spacing: .1px; }
.pages { grid-column: 1 / 3; display: flex; background: #f3f2f1; font-size: 17px; }
.mode { width: 36px; margin-left: 15px; padding: 11px 0 0 3px; }
.mode.on { border-bottom: 4px solid #117865; height: 46px; border-radius: 2px; }
.mode.ph { padding: 7px 0 0 0; margin-left: 38px; width: 20px; }
.arr { margin: 20px 0 0 31px; } .arr.r { margin-left: 27px; margin-right: 10px; }
.page { width: 113px; border-left: 1px solid #797775; border-right: 1px solid #797775; border-bottom: 6px solid #117865; background: #fff; color: #111; font-weight: 500; text-align: center; line-height: 56px; height: 53px; letter-spacing: -.2px; }
.plus { width: 59px; background: #117865; display: flex; align-items: center; justify-content: center; padding-bottom: 2px; }

/* floating panels */
.suggest, .datapop, .viz-btn { position: absolute; }
.suggest { left: 1251px; top: 1px; width: 274px; height: 390px; padding: 0 12px; background: #f3f2f1; border: 1px solid #a6a4a2; border-radius: 2px; box-shadow: 0 3px 8px rgba(0,0,0,.2); }
.beak { position: absolute; left: 272px; top: 2px; }
.head { display: flex; justify-content: space-between; align-items: center; }
.head b { font-size: 22.500px; letter-spacing: -.1px; }
.suggest .head { height: 58px; padding-right: 1px; }
.suggest .l1 { height: 34px; line-height: 31px; }
.picks { height: 46px; background: #fff; border: 1.5px solid #797775; border-radius: 3px; display: flex; align-items: center; padding-left: 5px; gap: 3px; width: 247px; }
.picks i { width: 36px; height: 36px; display: flex; align-items: center; justify-content: center; }
.picks i svg { width: 28px; height: 28px; }
.picks i.sel { background: #e1dfdd; border: 1.5px solid #605e5c; }
.picks .sep { width: 1px; height: 36px; background: #797775; margin: 0 9px 0 5px; }
.toggle { display: flex; align-items: center; gap: 12px; margin-top: 12px; }
.pill { width: 48px; height: 24px; border-radius: 12px; background: #117865; color: #fff; display: flex; align-items: center; padding-left: 7px; gap: 4px; font-size: 13px; }
.pill em { width: 12px; height: 12px; border-radius: 50%; background: #fff; }
.suggest .l2 { height: 44px; line-height: 52px; }
.well { border: 1.5px dashed #605e5c; background: #fff; padding: 6px; display: flex; flex-direction: column; gap: 6px; border-radius: 2px; }
.suggest .well { width: 247px; }
.chip, .add { height: 44px; border: 1.5px solid #605e5c; border-radius: 4px; }
.chip { display: flex; align-items: center; padding: 0 16px 0 9px; background: #fafafa; }
.chip span { flex: 1; padding-top: 2px; white-space: nowrap; }
.chip u { width: 1.500px; height: 24px; background: #605e5c; margin: 0 17px 0 12px; }
.add { text-align: center; font-weight: 600; line-height: 43px; letter-spacing: -.1px; background: #fff; }
.datapop { left: 1516px; top: 184px; width: 309px; height: 232px; padding: 0 13px; background: #f5f5f5; box-shadow: 0 2px 10px rgba(0,0,0,.28); border-radius: 3px; }
.datapop .head { height: 63px; padding-right: 9px; }
.nib { position: absolute; left: -11px; top: 104px; }
.datapop .lbl { height: 28px; line-height: 23px; }
.datapop .lb2 { height: 42px; line-height: 49px; }
.select { height: 36px; width: 284px; border: 1.5px solid #797775; border-radius: 3px; background: #fff; color: #605e5c; display: flex; justify-content: space-between; align-items: center; padding: 0 9px 0 12px; font-size: 17px; }
.select span { padding-top: 1px; }
.viz-btn { width: 42px; height: 42px; left: 1536px; display: flex; align-items: center; justify-content: center; border-radius: 3px; }
.viz-btn.one { top: 0; background: #b3b0ad; border: 1.500px solid #605e5c; }
.viz-btn.two { top: 60px; background: #e1dfdd; border: 1px solid #d2d0ce; box-shadow: 0 2px 5px rgba(0,0,0,.2); }

/* build pane */
.build { border-left: 1px solid #e1dfdd; padding: 0 11px 0 13px; }
.ptitle { display: flex; align-items: center; height: 59px; padding-right: 1px; }
.ptitle b { flex: 1; font-size: 22.500px; margin-left: -1px; }
.ptitle svg { margin-top: -2px; }
.ptitle svg + svg { margin-left: 13px; margin-right: 1px; color: #484644; }
.sug { height: 28px; line-height: 20px; }
.build > .lbl { margin-left: -1px; }
.visgrid { height: 318px; width: 246px; margin-left: -1px; border: 1.5px solid #797775; border-radius: 3px; background: #fff; display: grid; grid-template-columns: repeat(6, 39.200px); grid-template-rows: repeat(8, 39px); padding: 2px 0 0 4px; }
.visgrid i { display: flex; align-items: center; justify-content: center; }
.visgrid i.sel { border: 1.500px solid #111; margin: 1.500px; }
.visgrid svg { width: 28px; height: 28px; }
.visgrid .dt svg { width: 22px; height: 4px; margin-top: -5px; }
.field { height: 42px; padding-top: 13px; }
.field.first { height: 43px; padding-top: 14px; }
.build .well { width: 246px; margin-left: -1px; }

/* data pane */
.data { border-left: 1px solid #d6d4d2; padding: 0 6px 0 6px; white-space: nowrap; }
.data .ptitle { padding: 0 5px 0 7px; }
.search { height: 36px; width: 258px; margin: 9px 0 15px; border: 1px solid #d2d0ce; border-bottom: 1.500px solid #605e5c; border-radius: 5px; background: #fff; color: #605e5c; font-size: 20px; display: flex; align-items: center; gap: 10px; padding: 1px 0 0 18px; }
.tbl { display: flex; align-items: center; height: 36px; padding-left: 13px; margin-bottom: -1px; }
.gch { color: #605e5c; }
.ti { position: relative; margin: 0 8px 0 7px; }
.badge { position: absolute; left: 9px; top: 9px; }
.row { display: flex; align-items: center; height: 36px; padding: 1px 0 0 60px; color: #323130; }
.row svg { width: 16px; height: 18px; margin: -1px 10px 0 13px; }
.row s { width: 18px; height: 18px; margin-top: -1px; border: 1.500px solid #8a8886; border-radius: 3px; }
.row.on s { background: #117865; border-color: #117865; display: flex; justify-content: center; }
.row.on s::after { content: ""; width: 10px; height: 5px; margin-top: 3px; border-left: 2px solid #fff; border-bottom: 2px solid #fff; transform: rotate(-45deg); }

/* pane switcher */
.rail { background: #faf9f8; border-left: 1px solid #d2d0ce; display: flex; flex-direction: column; }
.rail div { height: 48px; padding: 9px 0 0 10px; }
.rail div.on { background: #e1dfdd; border: 1.500px solid #605e5c; border-right: 0; padding-top: 8px; }
.rail svg { width: 28px; height: 28px; }
.rail .gear { margin-top: auto; border-top: 1px solid #d2d0ce; padding: 9px 0 0 9px; }
.rail .gear svg { width: 30px; height: 30px; }

/* status bar */
.status { display: flex; align-items: center; background: #f3f2f1; border-bottom: 2px solid #111; color: #484644; white-space: nowrap; padding-top: 3px; }
.pg { width: 1323px; margin-left: 5px; }
.conn { width: 664px; letter-spacing: .015px; }
.status a { width: 250px; color: #117865; letter-spacing: .05px; }
.zoomer { margin-top: -4px; }
.pct { width: 54px; margin-left: 20px; margin-top: -3px; color: #605e5c; font-size: 17px; }
.fit { margin-left: 9px; margin-top: -3px; }
.wall { border-top: 2px solid #b0aeac; background: radial-gradient(circle at 56px 12px, #b8443c 0 5px, transparent 6px), linear-gradient(90deg, #d4d4d4 0, #dcdfd2 9%, #f3e0d0 30%, #dfe6f0 55%, #cfe0f2 65%, #d4d8e0 78%, #d2d2d2 100%); }
.mark { position: absolute; left: 1294px; top: 1416px; width: 944px; height: 72px; border: 5px solid #e80a0a; z-index: 9; }
```
